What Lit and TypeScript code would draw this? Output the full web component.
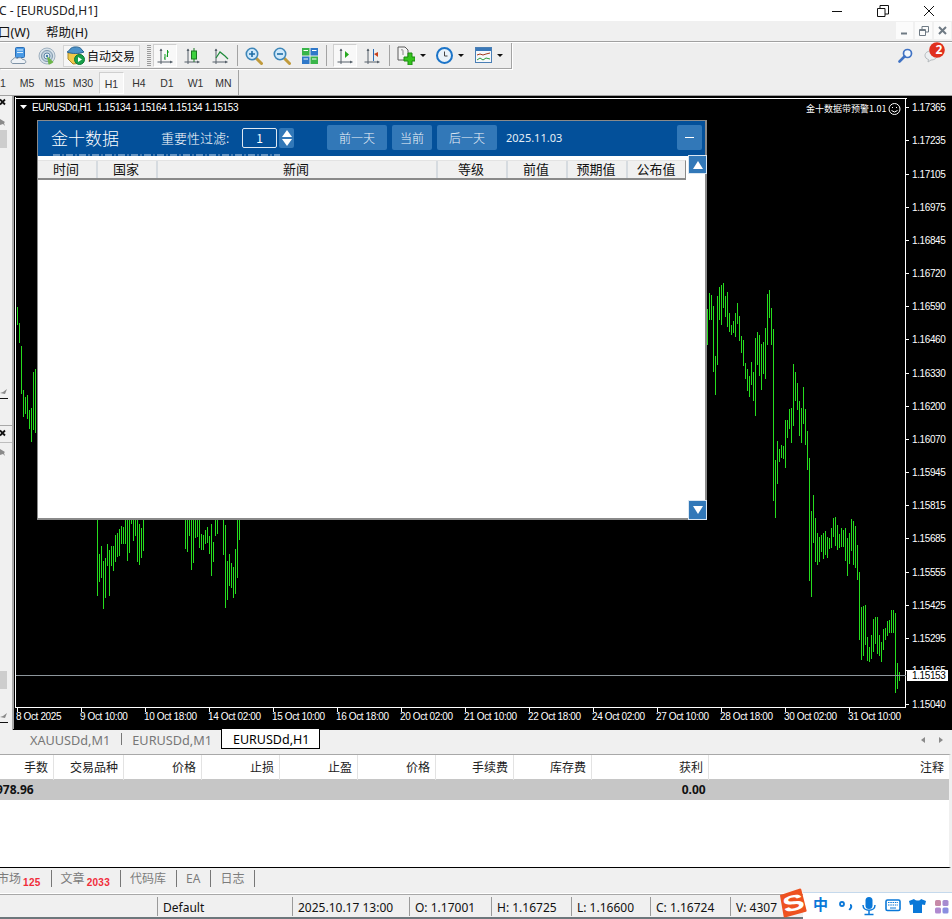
import { LitElement, html, css, svg } from "lit";
import { customElement } from "lit/decorators.js";

// [x*3, top*3, bottom*3] read from the right-hand part of the chart (origin 640,270)
const RIGHT: number[][] = [[202,117,225],[208,69,150],[214,75,150],[220,108,306],[226,258,375],[232,78,285],[238,51,150],[244,45,165],[250,39,114],[256,78,141],[262,66,171],[268,129,186],[274,165,195],[280,153,189],[286,129,201],[292,99,162],[298,138,213],[304,198,249],[310,210,288],[316,279,327],[322,297,363],[328,318,381],[334,276,345],[340,306,393],[346,204,438],[352,186,285],[358,195,318],[364,222,360],[370,216,312],[376,174,327],[382,72,225],[388,60,144],[394,114,225],[400,177,693],[406,570,744],[412,513,642],[418,537,576],[424,525,564],[430,528,567],[436,450,594],[442,450,504],[448,417,477],[454,414,519],[460,282,468],[466,306,393],[472,339,420],[478,393,498],[484,414,519],[490,351,462],[496,417,525],[502,483,600],[508,564,933],[514,723,981],[520,675,819],[526,744,876],[532,789,885],[538,801,876],[544,795,846],[550,789,867],[556,783,855],[562,801,864],[568,804,837],[574,774,834],[580,744,801],[586,741,828],[592,765,840],[598,792,834],[604,774,831],[610,780,831],[616,774,873],[622,804,918],[628,789,882],[634,747,843],[640,753,885],[646,768,894],[652,825,930],[658,906,1110],[664,1011,1170],[670,1008,1158],[676,1005,1125],[682,1101,1173],[688,1131,1176],[694,1095,1167],[700,1047,1146],[706,1041,1122],[712,1041,1152],[718,1095,1158],[724,1116,1176],[730,1077,1140],[736,1074,1110],[742,1053,1098],[748,1050,1089],[754,1020,1089],[760,1020,1089],[766,1029,1269],[772,1179,1257],[778,1206,1233]];
// origin 0,500
const MID: number[][] = [[286,50,62],[292,50,288],[298,162,246],[304,138,234],[310,183,327],[316,174,294],[322,132,198],[328,150,288],[334,138,198],[340,138,213],[346,105,186],[352,99,171],[358,87,168],[364,78,132],[370,81,132],[376,50,132],[382,50,183],[388,50,159],[394,50,72],[400,50,123],[406,50,108],[412,50,186],[418,72,195],[424,84,174],[430,50,153],[556,50,147],[562,50,156],[568,50,108],[574,50,210],[580,50,189],[586,50,114],[592,50,111],[598,50,144],[604,102,150],[610,105,150],[616,90,132],[622,81,129],[628,108,162],[634,72,228],[640,126,186],[646,50,108],[652,50,102],[670,50,165],[676,75,324],[682,183,300],[688,162,258],[694,189,264],[700,201,294],[706,147,282],[712,50,234],[718,50,120]];
// plain pixels
const LEFT: number[][] = [[17,307,325],[19,323,343],[21,346,394],[23,390,417],[25,397,414],[27,395,419],[29,410,429],[31,408,442],[33,372,430],[35,369,433]];

const PRICES: [string, number][] = [["1.17365",107],["1.17235",140],["1.17105",174],["1.16975",207],["1.16845",240],["1.16720",273],["1.16590",306],["1.16460",339],["1.16330",373],["1.16200",406],["1.16070",439],["1.15945",472],["1.15815",505],["1.15685",538],["1.15555",572],["1.15425",605],["1.15295",638],["1.15165",670],["1.15040",704]];
const TIMES = ["8 Oct 2025","9 Oct 10:00","10 Oct 18:00","14 Oct 02:00","15 Oct 10:00","16 Oct 18:00","20 Oct 02:00","21 Oct 10:00","22 Oct 18:00","24 Oct 02:00","27 Oct 10:00","28 Oct 18:00","30 Oct 02:00","31 Oct 10:00"];

const bar = (x: number, t: number, b: number) => svg`<rect x=${x} y=${t} width="1" height=${Math.max(1, b - t)} fill="#26dd1e"/>`;

const chartSvg = svg`
<svg class="canvas" viewBox="14 96 938 634" width="938" height="634" shape-rendering="crispEdges">
  <path d="M15.5 97V708M15 98.5H906.5M905.5 98V708M15 707.5H906" stroke="#fff" fill="none"/>
  ${LEFT.map(([x, t, b]) => bar(x, t, b))}
  ${MID.map(([x, t, b]) => bar(Math.floor(x / 3), 500 + Math.floor(t / 3), 500 + Math.floor(b / 3)))}
  ${RIGHT.map(([x, t, b]) => bar(640 + Math.floor(x / 3), 270 + Math.floor(t / 3), 270 + Math.floor(b / 3)))}
  ${PRICES.map(([p, y]) => svg`<rect x="906" y=${y} width="3" height="1" fill="#fff"/><text class="ax" x="912" y=${y + 4}>${p}</text>`)}
  ${TIMES.map((t, i) => svg`<rect x=${17 + i * 64} y="708" width="1" height="4" fill="#fff"/><text class="ax" x=${16 + i * 64} y="720">${t}</text>`)}
  <rect x="16" y="675" width="890" height="1" fill="#8d969c"/>
  <rect x="907" y="670" width="41" height="11" fill="#fff"/>
  <text class="ax dark" x="912" y="679">1.15153</text>
  <path d="M20 105h7l-3.500 4z" fill="#fff" shape-rendering="auto"/>
  <text class="ax" x="32" y="111">EURUSDd,H1</text>
  <text class="ax" x="97" y="111">1.15134 1.15164 1.15134 1.15153</text>
  <text class="ax cn" x="806" y="112">金十数据带预警1.01</text>
  <g fill="none" stroke="#fff" shape-rendering="auto">
    <circle cx="894.500" cy="109" r="5.500"/>
    <path d="M891.500 110.500q3 3 6 0" />
  </g>
  <rect x="892" y="107" width="1" height="1" fill="#fff"/><rect x="896" y="107" width="1" height="1" fill="#fff"/>
</svg>`;

const ic = (w: number, h: number, body: unknown) => html`<svg width=${w} height=${h} viewBox="0 0 ${w} ${h}" class="ico">${body}</svg>`;

const axes = svg`<path d="M5 2v15M1.500 15h15" stroke="#56606a" fill="none"/><path d="M3.500 4 5 1.500 6.500 4zM14 13.500l2.500 1.500-2.500 1.500z" fill="#56606a"/>`;

const icServer = ic(18, 18, svg`<rect x="5.500" y=".5" width="9" height="10" rx="1" fill="#4a9be6" stroke="#2a6db5"/><path d="M7 3h6M7 5.500h6" stroke="#dcefff"/><path d="M3 16.500c-2.500 0-2.500-4 0-4 .5-2 3-2.500 4-1 2-1.500 5-1 5.500 1 3.500-.5 4.500 4 1.500 4z" fill="#eef2f6" stroke="#7f93a6"/>`);
const icSignal = ic(18, 18, svg`<circle cx="9" cy="9" r="8" fill="#d9e3ea" stroke="#9fb0bf"/><circle cx="9" cy="9" r="5.500" fill="#c3d3df" stroke="#7f98ad"/><circle cx="9" cy="9" r="3" fill="#e8f0f5" stroke="#5f86a6"/><path d="M9 9l6.500 6c-2 2-4 2.500-5 2.500z" fill="#6cb54a"/><circle cx="9" cy="9" r="1.200" fill="#3f7ea8"/>`);
const icAuto = ic(19, 19, svg`<path d="M2 7l8-1 7 4-1 7-9 1-5-5z" fill="#f1c84a" stroke="#a98a2a"/><path d="M1 6c3-1 2-4 7-5 4-.5 7 .5 8 3l2 2c-5 2-12 2-17 0z" fill="#4c92c9" stroke="#2d6590"/><circle cx="13.500" cy="13.500" r="5" fill="#17a04a" stroke="#0e7a36"/><path d="M12 11l4 2.500-4 2.500z" fill="#fff"/>`);
const icBars = ic(18, 18, svg`${axes}<path d="M9 7v6M8 11h1M11.500 3v7M11.500 5h1.500M11.500 9h-1" stroke="#0f9a1e" fill="none"/>`);
const icCandle = ic(18, 18, svg`${axes}<path d="M11 1v14" stroke="#1a7a22"/><rect x="8.500" y="4" width="5" height="8" fill="#3ed13e" stroke="#1a7a22"/>`);
const icLine = ic(18, 18, svg`${axes}<path d="M5 11l4-6 5 4 3 3" stroke="#1e8a3a" fill="none" stroke-width="1.200"/>`);
const icZoom = (plus: boolean) => ic(18, 18, svg`<path d="M10.500 10.500l6 6" stroke="#c09a3c" stroke-width="3" stroke-linecap="round"/><circle cx="7" cy="7" r="5.700" fill="#cfe9fb" stroke="#3d86b8" stroke-width="1.600"/><path d="M4 7h6${plus ? "M7 4v6" : ""}" stroke="#1f6da5" stroke-width="1.600"/>`);
const icTile = ic(18, 18, svg`<rect x="1" y="1" width="7.500" height="7.500" fill="#39b54a"/><rect x="9.500" y="1" width="7.500" height="7.500" fill="#2f78c9"/><rect x="1" y="9.500" width="7.500" height="7.500" fill="#2f78c9"/><rect x="9.500" y="9.500" width="7.500" height="7.500" fill="#39b54a"/><path d="M2.500 3.500h4.500M11 3.500h4.500M2.500 12h4.500M11 12h4.500" stroke="#fff"/>`);
const icScroll = ic(18, 18, svg`${axes}<path d="M9 4l4 3.500-4 3.500z" fill="#26a81f"/>`);
const icShift = ic(18, 18, svg`${axes}<path d="M10.500 2v12" stroke="#2a6db5"/><path d="M11 7l4-2v5z" fill="#c8401c"/>`);
const icNew = ic(18, 19, svg`<path d="M1 1h7l3 3v10H1z" fill="#f4f4f4" stroke="#5a5a5a"/><path d="M4 4c2-1 2 0 2 2v3" stroke="#888" fill="none"/><path d="M7 11h4V7h4v4h3v4h-3v4h-4v-4H7z" fill="#35c31e" stroke="#1c8a10"/>`);
const icClock = ic(17, 17, svg`<circle cx="8.500" cy="8.500" r="7.500" fill="#e9f2f9" stroke="#1c74c8" stroke-width="2"/><path d="M8.500 4.500v4.500h3" stroke="#444" fill="none"/>`);
const icTpl = ic(17, 17, svg`<rect x=".5" y=".5" width="16" height="15" fill="#f6f8fb" stroke="#4a7fb5"/><rect x="1" y="1" width="15" height="3" fill="#3a78b8"/><path d="M2 8l3-1 3 1 3-1 4-1" stroke="#a33a1c" fill="none"/><path d="M2 13l3-2 3 2 3-2 4 1" stroke="#2a9a3a" fill="none"/>`);
const caret = html`<span class="caret"></span>`;

const icSearch = ic(15, 15, svg`<circle cx="9.500" cy="5.500" r="4" fill="#f4f8fd" stroke="#3f72c4" stroke-width="1.700"/><path d="M6.500 8.500 1.500 13.500" stroke="#3f72c4" stroke-width="2.600" stroke-linecap="round"/>`);
const icChat = ic(24, 22, svg`<path d="M2 13.500c0-3 3-4.500 6-4.500s6 1.500 6 4.500-3 4.500-6 4.500l-3 2 .5-2.500c-2-.5-3.500-2-3.500-4z" fill="#eceff1" stroke="#b5babd"/><circle cx="14" cy="8" r="7.800" fill="#e0301e"/>`);

const tools = [
  html`<span class="t">${icServer}</span>`,
  html`<span class="t">${icSignal}</span>`,
  html`<span class="auto">${icAuto}<span>自动交易</span></span>`,
  html`<span class="t"><span class="grip"></span></span>`,
  html`<span class="t"><span class="on">${icBars}</span></span>`,
  html`<span class="t">${icCandle}</span>`,
  html`<span class="t">${icLine}</span>`,
  html`<span class="t"><span class="vr"></span></span>`,
  html`<span class="t">${icZoom(true)}</span>`,
  html`<span class="t">${icZoom(false)}</span>`,
  html`<span class="t">${icTile}</span>`,
  html`<span class="t"><span class="vr"></span></span>`,
  html`<span class="t end"><span class="on">${icScroll}</span></span>`,
  html`<span class="t">${icShift}</span>`,
  html`<span class="t"><span class="vr"></span></span>`,
  html`<span class="t g">${icNew}${caret}</span>`,
  html`<span class="t g">${icClock}${caret}</span>`,
  html`<span class="t g">${icTpl}${caret}</span>`,
];

const COLS = ["手数","交易品种","价格","止损","止盈","价格","手续费","库存费","获利","注释"];
const DLG = ["时间","国家","新闻","等级","前值","预期值","公布值"];
const TF = ["M5","M15","M30","H1","H4","D1","W1","MN"];

@customElement("app-root")
export class AppRoot extends LitElement {
  static styles = css`
    :host { display: block; position: relative; width: 952px; height: 919px; overflow: hidden; background: #f0f0f0; font-family: "Noto Sans", "Noto Sans CJK SC", sans-serif; color: #111; }
    .ico { display: block; flex: none; }
    .title { height: 21px; background: #fff; display: flex; align-items: center; font-size: 12px; position: relative; color: #222; }
    .title .name { margin-left: -1px; }
    .winbtns { margin-left: auto; display: flex; align-items: center; }
    .wb { width: 46px; display: flex; justify-content: center; }
    .menu { height: 20px; display: flex; align-items: center; font-size: 12.500px; background: #f0f0f0; }
    .menu .m1 { margin-left: -2px; width: 48px; }
    .mdi { margin-left: auto; margin-right: 1px; display: flex; gap: 2px; align-self: flex-start; margin-top: 1px; }
    .mdi span { width: 17px; height: 17px; background: #fbfbfb; display: flex; align-items: center; justify-content: center; }
    .rule { height: 2px; border-top: 1px solid #a0a0a0; background: #fff; box-sizing: border-box; }
    .row1 { height: 27px; display: flex; background: #eeeeee; }
    .tb { width: 503px; padding-left: 8px; height: 25px; display: grid; align-items: center; border-right: 1px solid #a3a3a3; border-bottom: 1px solid #a3a3a3;
      grid-template-columns: 22px 33px 77px 12px 25px 29px 28px 6px 28px 28px 28px 5px 28px 29px 6px 38px 39px 39px; box-shadow: 1px 1px 0 #fff; }
    .t { display: flex; align-items: center; justify-content: center; height: 25px; }
    .t.end { justify-content: flex-end; }
    .t.g { gap: 5px; }
    .on { width: 24px; height: 23px; display: flex; align-items: center; justify-content: center; background: #f8f8f8; border: 1px solid #cfcfcf; border-right-color: #fff; border-bottom-color: #fff; box-sizing: border-box; }
    .auto { display: flex; align-items: center; gap: 2px; height: 22px; background: #f6f6f6; border: 1px solid #d4d4d4; padding-left: 2px; font-size: 12px; box-sizing: border-box; white-space: nowrap; }
    .grip { width: 4px; height: 22px; margin-left: 5px; background: repeating-linear-gradient(#9a9a9a 0 1px, transparent 1px 2px); }
    .vr { width: 1px; height: 21px; background: #a3a3a3; }
    .caret { width: 0; height: 0; border-left: 3.5px solid transparent; border-right: 3.5px solid transparent; border-top: 3.5px solid #111; }
    .right { margin-left: auto; display: flex; align-items: center; gap: 10px; padding: 0 5px 3px 0; }
    .chatwrap { position: relative; width: 24px; height: 22px; margin-top: -4px; }
    .badge { position: absolute; left: 9px; top: 1px; width: 14px; text-align: center; color: #fff; font-size: 12px; font-weight: 700; line-height: 14px; }
    .row2 { height: 26px; box-sizing: border-box; border-bottom: 1px solid #a0a0a0; display: flex; background: #eeeeee; font-family: "Liberation Sans", sans-serif; font-size: 10.500px; color: #333; }
    .tf { width: 238px; height: 25px; display: grid; grid-template-columns: 13px repeat(3, 28px) 28px 28px 28px 29px 27px; align-items: center; border-right: 1px solid #a3a3a3; text-align: center; }
    .tf .one { text-align: left; }
    .tf .active { height: 22px; line-height: 22px; width: 25px; margin-left: 2px; background: #f6f6f6; border: 1px solid #cfcfcf; border-right-color: #fff; border-bottom-color: #fff; box-sizing: border-box; }
    .main { height: 634px; display: flex; }
    .side { width: 12px; display: flex; flex-direction: column; background: #f0f0f0; }
    .pane { display: flex; flex-direction: column; overflow: hidden; }
    .p1 { height: 330px; border-bottom: 1px solid #a8a8a8; box-sizing: border-box; }
    .p2 { flex: 1; padding-top: 1px; }
    .x { height: 14px; }
    .p2 .x { height: 15px; border-bottom: 1px solid #bdbdbd; }
    .fold { margin-top: 8px; }
    .p2 .fold { margin-top: 5px; }
    .thumb { width: 7px; height: 18px; background: #cdcdcd; }
    .p1 .thumb { margin-top: 3px; }
    .p2 .thumb { margin-bottom: 23px; }
    .sp { flex: 1; }
    .chk { margin-bottom: 4px; }
    .bl { width: 8px; height: 1px; background: #111; }
    .p1 .bl { margin-bottom: 26px; }
    .p2 .bl { margin-bottom: 7px; }
    .chart { position: relative; width: 940px; background: #000; border-left: 2px solid #a8a8a8; box-sizing: border-box; }
    .canvas { display: block; position: absolute; left: 0; top: 0; }
    .ax { font-family: "Liberation Sans", sans-serif; font-size: 10px; fill: #fff; letter-spacing: -.38px; }
    .ax.dark { fill: #000; }
    .ax.cn { font-family: "Noto Sans CJK SC", sans-serif; font-size: 9px; letter-spacing: 0; }
    .dlg { position: absolute; left: 23px; top: 24px; width: 670px; height: 400px; box-sizing: border-box; background: #fff; border: 1px solid #8a8a8a; border-right-width: 2px; border-bottom-width: 2px; display: flex; flex-direction: column; font-family: "Noto Sans CJK SC", sans-serif; }
    .dh { height: 35px; flex: none; background: #03509a; display: flex; align-items: center; padding: 4px 3px 6px 13px; box-sizing: border-box; color: #fff; position: relative; overflow: hidden; }
    .dt { font-size: 17px; width: 110px; font-weight: 300; white-space: nowrap; }
    .fl { font-size: 13px; width: 81px; font-weight: 300; white-space: nowrap; }
    .inp { width: 35px; height: 20px; border: 1px solid #dfe9f2; border-radius: 2px; box-sizing: border-box; font-size: 12px; line-height: 18px; text-align: center; }
    .spin { width: 15px; height: 20px; margin-left: 2px; margin-right: 33px; background: #3278b8; border-radius: 2px; display: flex; flex-direction: column; align-items: center; justify-content: center; gap: 2px; }
    .spin i { display: block; width: 0; height: 0; border-left: 5px solid transparent; border-right: 5px solid transparent; }
    .spin .u { border-bottom: 7px solid #fff; }
    .spin .d { border-top: 7px solid #fff; }
    .db { height: 25px; background: #3278b8; border-radius: 2px; display: flex; align-items: center; justify-content: center; font-size: 12px; color: #eef3f8; font-weight: 300; margin-right: 5px; }
    .w60 { width: 60px; }
    .w40 { width: 40px; }
    .date { font-size: 11px; margin-left: 4px; color: #e6eef5; font-family: "Noto Sans", sans-serif; }
    .min { margin-left: auto; width: 25px; height: 25px; background: #3278b8; border-radius: 2px; display: flex; align-items: center; justify-content: center; }
    .min i { display: block; width: 9px; height: 1px; background: #fff; }
    .clip { position: absolute; left: 15px; bottom: 0; width: 227px; height: 2px; opacity: .55; background: repeating-linear-gradient(90deg, #b9cde2 0 7px, #03509a 7px 9px, #7fa3c9 9px 11px, #03509a 11px 13px); }
    .dtable { padding-top: 4px; flex: 1; position: relative; }
    .dcols { width: 648px; display: grid; grid-template-columns: 60px 60px 280px 70px 60px 60px 58px; height: 20px; box-sizing: border-box; background: #f0f0f0; border-bottom: 2px solid #8a8a8a; border-right: 1px solid #8a8a8a; border-top: 1px solid #e3e3e3; }
    .dcols span { text-align: center; font-size: 13px; line-height: 16px; border-right: 2px solid #d6dbe0; padding-right: 2px; color: #111; font-weight: 400; }
    .dcols span:last-child { border-right: 0; }
    .sb { position: absolute; right: -2px; width: 19px; height: 19px; background: #3278b8; border: 1px solid #dbe7f2; box-sizing: border-box; display: flex; align-items: center; justify-content: center; }
    .sb.up { top: -1px; }
    .sb.dn { bottom: -2px; height: 20px; }
    .sb i { display: block; width: 0; height: 0; border-left: 5.500px solid transparent; border-right: 5.500px solid transparent; }
    .sb.up i { border-bottom: 8px solid #fff; }
    .sb.dn i { border-top: 8px solid #fff; }
    .tabs { height: 20px; position: relative; display: flex; background: #f0f0f0; font-size: 12.700px; margin-left: 13px; border-top: 1px solid #000; box-sizing: border-box; margin-top: -1px; }
    .tabs .ti { color: #777; display: flex; align-items: center; white-space: nowrap; }
    .t1 { padding: 0 12px 0 17px; position: relative; }
    .t1::after { content: ""; position: absolute; right: 0; top: 3px; height: 12px; width: 1px; background: #777; }
    .t2 { padding: 0 9px 0 10px; }
    .tabs .act { color: #000; background: #fff; border: 1px solid #000; border-top: 0; margin-top: -1px; padding: 1px 10px 0 11px; box-sizing: border-box; height: 20px; display: flex; align-items: center; white-space: nowrap; font-size: 12.500px; }
    .arrows { margin-left: auto; display: flex; gap: 14px; align-items: center; padding-right: 9px; }
    .arrows i { display: block; width: 0; height: 0; border-top: 3.500px solid transparent; border-bottom: 3.500px solid transparent; }
    .arrows .l { border-right: 4px solid #8a8a8a; }
    .arrows .r { border-left: 4px solid #8a8a8a; }
    .term { height: 112px; border-top: 1px solid #a8a8a8; border-bottom: 1px solid #000; border-right: 2px solid #f0f0f0; background: #fff; margin-right: 1px; margin-top: 5px; overflow: hidden; }
    .grid { display: grid; grid-template-columns: 54px 70px 78px 78px 78px 78px 78px 78px 117px 1fr; }
    .hd { height: 24px; }
    .hd span { font-size: 12px; line-height: 25px; text-align: right; padding-right: 5px; border-right: 1px solid #e3e3e3; box-sizing: border-box; color: #222; }
    .hd span:last-child { border-right: 0; }
    .gr { height: 21px; background: #c6c6c6; display: flex; font-size: 12px; font-weight: 700; line-height: 21px; }
    .gr .a { margin-left: -4px; }
    .gr .b { margin-left: 648px; color: #111; }
    .btabs { height: 24px; display: flex; align-items: center; font-size: 12px; color: #7c7c7c; }
    .bt { display: flex; padding: 0 10px 0 9px; height: 17px; line-height: 17px; margin-top: -4px; border-right: 1px solid #777; white-space: nowrap; }
    .bt:first-child { margin-left: -12px; }
    .bt b { color: #f02c3a; font-size: 10px; margin: 4px 0 0 2px; font-weight: 700; font-family: "Liberation Sans", sans-serif; letter-spacing: .3px; }
    .stat { height: 25px; margin-top: 2px; border-top: 1px solid #a8a8a8; box-shadow: 0 -1px 0 #fff; display: flex; align-items: center; font-size: 12px; border-bottom: 2px solid #6d777c; box-sizing: border-box; }
    .stat span { height: 19px; line-height: 21px; padding-left: 5px; border-left: 1px solid #9a9a9a; box-sizing: border-box; white-space: nowrap; flex: none; }
    .stat span:first-child { border-left: 0; width: 157px; }
    .s1 { width: 135px; } .s2 { width: 117px; } .s3 { width: 82px; } .s4 { width: 80px; } .s5 { width: 79px; } .s6 { width: 80px; }
    .ime { position: absolute; right: 0; bottom: 0; width: 149px; height: 27px; background: #fff; border-top: 1px solid #c5d9ec; box-sizing: border-box; display: flex; align-items: center; }
    .ime .zh { position: absolute; left: 10px; top: 0; font-size: 15px; line-height: 22px; font-weight: 700; color: #0a78d8; font-family: "Noto Sans CJK SC", sans-serif; }
    .ime svg.tr { position: absolute; left: 0; top: 0; }
    .logo { position: absolute; left: 779px; top: 887px; }
  `;

  render() {
    return html`
      <div class="title">
        <span class="name">C - [EURUSDd,H1]</span>
        <div class="winbtns">
          <span class="wb">${ic(12, 12, svg`<path d="M1 6.500h10" stroke="#111"/>`)}</span>
          <span class="wb">${ic(12, 12, svg`<path d="M.5 3.500h7.500v8h-7.500zM3 3.500V.5h8.500V9H8" stroke="#111" fill="none"/>`)}</span>
          <span class="wb">${ic(12, 12, svg`<path d="M1 1l10 10M11 1 1 11" stroke="#111" fill="none"/>`)}</span>
        </div>
      </div>
      <div class="menu">
        <span class="m1">口(W)</span><span>帮助(H)</span>
        <div class="mdi">
          <span>${ic(9, 9, svg`<path d="M1 7.500h6" stroke="#6f7a84" stroke-width="2"/>`)}</span>
          <span>${ic(10, 10, svg`<path d="M.5 3.500h6v6h-6zM3 3V.5h6.500v5.500H7" stroke="#6f7a84" fill="none"/><path d="M1 4h5" stroke="#6f7a84" stroke-width="2"/>`)}</span>
          <span>${ic(9, 9, svg`<path d="M1 1l7 7M8 1 1 8" stroke="#6f7a84" stroke-width="2"/>`)}</span>
        </div>
      </div>
      <div class="rule"></div>
      <div class="row1">
        <div class="tb">${tools}</div>
        <div class="right">
          ${icSearch}
          <span class="chatwrap">${icChat}<span class="badge">2</span></span>
        </div>
      </div>
      <div class="row2">
        <div class="tf">
          <span class="one">1</span>
          ${TF.map((t) => html`<span class=${t === "H1" ? "active" : ""}>${t}</span>`)}
        </div>
      </div>
      <div class="main">
        <div class="side">
          <div class="pane p1">
            ${this.sideHead()}
            <div class="thumb"></div>
            <div class="sp"></div>
            ${this.sideFoot()}
          </div>
          <div class="pane p2">
            ${this.sideHead()}
            <div class="sp"></div>
            <div class="thumb"></div>
            ${this.sideFoot()}
          </div>
        </div>
        <div class="chart">
          ${chartSvg}
          <div class="dlg">
            <div class="dh">
              <span class="dt">金十数据</span>
              <span class="fl">重要性过滤:</span>
              <span class="inp">1</span>
              <span class="spin"><i class="u"></i><i class="d"></i></span>
              <span class="db w60">前一天</span>
              <span class="db w40">当前</span>
              <span class="db w60">后一天</span>
              <span class="date">2025.11.03</span>
              <span class="min"><i></i></span>
              <span class="clip"></span>
            </div>
            <div class="dtable">
              <div class="dcols">${DLG.map((c) => html`<span>${c}</span>`)}</div>
              <span class="sb up"><i></i></span>
              <span class="sb dn"><i></i></span>
            </div>
          </div>
        </div>
      </div>
      <div class="tabs">
        <span class="ti t1">XAUUSDd,M1</span>
        <span class="ti t2">EURUSDd,M1</span>
        <span class="act">EURUSDd,H1</span>
        <span class="arrows"><i class="l"></i><i class="r"></i></span>
      </div>
      <div class="term">
        <div class="grid hd">${COLS.map((c) => html`<span>${c}</span>`)}</div>
        <div class="gr"><span class="a">978.96</span><span class="b">0.00</span></div>
      </div>
      <div class="btabs">
        <span class="bt">市场<b>125</b></span>
        <span class="bt">文章<b>2033</b></span>
        <span class="bt">代码库</span>
        <span class="bt">EA</span>
        <span class="bt">日志</span>
      </div>
      <div class="stat">
        <span></span>
        <span class="s1">Default</span>
        <span class="s2">2025.10.17 13:00</span>
        <span class="s3">O: 1.17001</span>
        <span class="s4">H: 1.16725</span>
        <span class="s5">L: 1.16600</span>
        <span class="s6">C: 1.16724</span>
        <span>V: 4307</span>
      </div>
      <div class="ime">
        <span class="zh">中</span>
        <svg class="tr" width="149" height="27" viewBox="0 0 149 27">
          <circle cx="39" cy="11" r="2" fill="none" stroke="#0a78d8" stroke-width="1.800"/>
          <path d="M47 12c1 0 1.800 1 .8 3l-1.500 2" stroke="#0a78d8" stroke-width="2" fill="none"/>
          <rect x="62.500" y="4" width="7" height="12" rx="3.500" fill="#0a78d8"/>
          <path d="M60 12c0 7 12 7 12 0M66 18v3M61.500 21.500h9" stroke="#0a78d8" stroke-width="1.500" fill="none"/>
          <rect x="83" y="7" width="14" height="10.500" rx="1.500" fill="#fff" stroke="#0a78d8" stroke-width="1.600"/>
          <path d="M85 9.500h10M85 12h10" stroke="#0a78d8" stroke-dasharray="1.500 .8"/><path d="M87 15h6" stroke="#0a78d8"/>
          <path d="M111 6l-5 2 1 4 3-.5V20h9v-8.500l3 .5 1-4-5-2c-1 2-5 2-7 0z" fill="#0a78d8"/>
          <rect x="132" y="7" width="6" height="6" rx="1.500" fill="#c78aa8"/>
          <rect x="139.500" y="7" width="6" height="6" rx="1.500" fill="#a78bd0"/>
          <rect x="132" y="14.500" width="6" height="6" rx="1.500" fill="#b08ad0"/>
          <rect x="139.500" y="14.500" width="6" height="6" rx="1.500" fill="#8a8ee0"/>
        </svg>
      </div>
      <svg class="logo" width="30" height="32" viewBox="0 0 30 32">
        <path d="M3 7.500 21 1.500q1 0 1.300 1L27.600 23.500q.3 1-.7 1.300L6 30.500q-1 .2-1.300-.8L1 8.500q0-.8 2-1z" fill="#ee5220"/>
        <text text-anchor="middle" font-family="Liberation Sans, sans-serif" font-weight="700" font-size="26" fill="#fff" transform="translate(14.500 16) rotate(-14) scale(1.250 .85) translate(0 9)">S</text>
      </svg>
    `;
  }

  private sideHead() {
    return html`
      <div class="x">${ic(7, 12, svg`<path d="M0 3.500l5 5M5 3.500l-5 5" stroke="#111" stroke-width="1.800"/>`)}</div>
      <div class="fold">${ic(7, 9, svg`<path d="M0 1l5 3-1 1 1 3-2-2-3 1z" fill="#8a8a8a"/>`)}</div>
    `;
  }

  private sideFoot() {
    return html`
      <div class="chk">${ic(8, 6, svg`<path d="M0 5l3-1 4-3-2 5z" fill="#8a8a8a"/>`)}</div>
      <div class="bl"></div>
    `;
  }
}
